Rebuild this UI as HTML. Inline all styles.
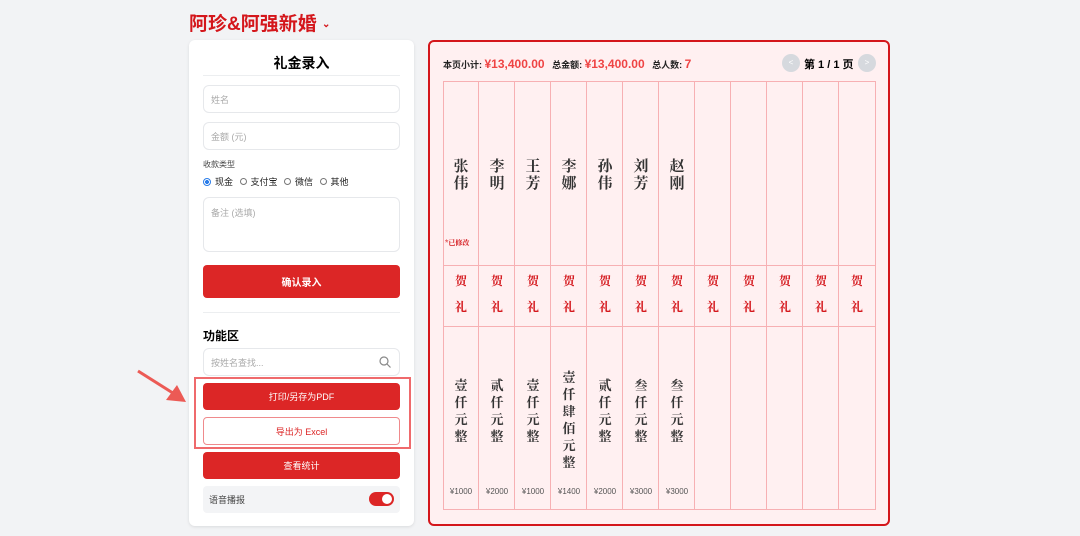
<!DOCTYPE html><html><head><meta charset="utf-8"><style>
*{box-sizing:border-box;margin:0;padding:0}
body{width:1080px;height:536px;background:#f2f3f5;font-family:"Liberation Sans","Noto Sans CJK SC",sans-serif;position:relative;overflow:hidden}
.abs{position:absolute}
.title{left:189px;top:9px;font-size:19px;font-weight:bold;color:#d4161b}
.card{left:189px;top:40px;width:225px;height:486px;background:#fff;border-radius:6px;box-shadow:0 1px 3px rgba(0,0,0,.1)}
.inp{position:absolute;left:14px;width:197px;border:1px solid #e6e8eb;border-radius:6px;font-size:9px;color:#aaa;padding-left:7px;display:flex;align-items:center}
.btn{position:absolute;left:14px;width:197px;height:27px;background:#dc2626;color:#fff;font-size:9px;border-radius:4px;display:flex;align-items:center;justify-content:center}
.panel{left:428px;top:40px;width:462px;height:486px;border:2px solid #d4161b;border-radius:6px;background:#fff0f1}
.col{position:absolute;top:81px;width:36px;height:429px;border-right:1px solid #f7b0b3}
.ser{font-family:"Noto Serif CJK SC",serif;font-weight:bold}
.nm{position:absolute;top:157px;width:36px;text-align:center;font-size:15px;line-height:17px;color:#333}
.hl{position:absolute;width:36px;text-align:center;font-size:12px;color:#d4161b}
.am{position:absolute;top:376px;width:36px;text-align:center;font-size:13px;line-height:17px;color:#333}
.yn{position:absolute;top:487px;width:36px;text-align:center;font-size:8px;color:#555}
</style></head><body>
<div class="abs title">阿珍&amp;阿强新婚 <span style="font-size:10px;vertical-align:3px">⌄</span></div>
<div class="abs card">
<div class="abs" style="left:0;width:225px;top:13px;text-align:center;font-size:14px;font-weight:bold">礼金录入</div>
<div class="abs" style="left:14px;top:35px;width:197px;border-top:1px solid #eceef0"></div>
<div class="inp" style="top:45px;height:28px">姓名</div>
<div class="inp" style="top:82px;height:28px">金额 (元)</div>
<div class="abs" style="left:14px;top:119px;font-size:8px;color:#444">收款类型</div>
<div class="abs" style="left:14px;top:135px;font-size:9px;color:#222;display:flex;align-items:center;gap:4px">
<span style="width:8px;height:8px;border-radius:50%;border:1px solid #2b7de9;background:radial-gradient(#2b7de9 45%,#fff 50%)"></span>现金&nbsp;
<span style="width:7px;height:7px;border-radius:50%;border:1px solid #777"></span>支付宝&nbsp;
<span style="width:7px;height:7px;border-radius:50%;border:1px solid #777"></span>微信&nbsp;
<span style="width:7px;height:7px;border-radius:50%;border:1px solid #777"></span>其他</div>
<div class="inp" style="top:157px;height:55px;align-items:flex-start;padding-top:8px">备注 (选填)</div>
<div class="btn" style="top:225px;height:33px;font-weight:bold;font-size:10px">确认录入</div>
<div class="abs" style="left:14px;top:272px;width:197px;border-top:1px solid #eceef0"></div>
<div class="abs" style="left:14px;top:287px;font-size:12px;font-weight:bold">功能区</div>
<div class="inp" style="top:308px;height:28px">按姓名查找...<svg style="position:absolute;right:8px;top:7px" width="12" height="12" viewBox="0 0 12 12"><circle cx="5" cy="5" r="4" fill="none" stroke="#888" stroke-width="1.2"/><path d="M8 8l3.5 3.5" stroke="#888" stroke-width="1.2"/></svg></div>
<div class="btn" style="top:343px">打印/另存为PDF</div>
<div class="btn" style="top:377px;height:28px;background:#fff;border:1px solid #ef8a8c;color:#dc2626">导出为 Excel</div>
<div class="btn" style="top:412px">查看统计</div>
<div class="abs" style="left:14px;top:446px;width:197px;height:27px;background:#f3f4f6;border-radius:4px;font-size:9px;color:#444;padding:7px 0 0 6px">语音播报
<div class="abs" style="right:6px;top:6px;width:25px;height:14px;border-radius:7px;background:#dc2626"><div class="abs" style="right:2px;top:2px;width:10px;height:10px;border-radius:50%;background:#fff"></div></div></div>
</div>
<div class="abs" style="left:194px;top:377px;width:217px;height:72px;border:2px solid #ef6a6c"></div>
<svg class="abs" style="left:130px;top:362px" width="62" height="46"><path d="M8 9L46 33" stroke="#ec5a55" stroke-width="3"/><path d="M56 40L36 38L47 23Z" fill="#ec5a55"/></svg>
<div class="abs panel"></div>
<div class="abs" style="left:443px;top:57px;font-size:9px;font-weight:bold;color:#222;white-space:nowrap">本页小计: <span style="color:#ef4444;font-size:12px">¥13,400.00</span>&nbsp;&nbsp; 总金额: <span style="color:#ef4444;font-size:12px">¥13,400.00</span>&nbsp;&nbsp; 总人数: <span style="color:#ef4444;font-size:12px">7</span></div>
<div class="abs" style="left:782px;top:54px;width:18px;height:18px;border-radius:50%;background:#d6d9de;color:#fff;font-size:8px;text-align:center;line-height:18px">&lt;</div>
<div class="abs" style="left:804px;top:56px;font-size:11px;font-weight:bold">第 1 / 1 页</div>
<div class="abs" style="left:858px;top:54px;width:18px;height:18px;border-radius:50%;background:#d6d9de;color:#fff;font-size:8px;text-align:center;line-height:18px">&gt;</div>
<div class="abs" style="left:443px;top:81px;width:433px;height:429px;border:1px solid #f7b0b3"></div>
<div class="abs" style="left:443px;top:265px;width:433px;border-top:1px solid #f7b0b3"></div>
<div class="abs" style="left:443px;top:326px;width:433px;border-top:1px solid #f7b0b3"></div>
<div id="g"></div>
<script>
var xs=[443,479,515,551,587,623,659,695,731,767,803,839];
var n=["张伟","李明","王芳","李娜","孙伟","刘芳","赵刚"];
var a=["壹仟元整","贰仟元整","壹仟元整","壹仟肆佰元整","贰仟元整","叁仟元整","叁仟元整"];
var y=["¥1000","¥2000","¥1000","¥1400","¥2000","¥3000","¥3000"];
var h="";
xs.forEach(function(x,i){
 if(i<11)h+='<div class="col" style="left:'+x+'px"></div>';
 h+='<div class="hl ser" style="left:'+x+'px;top:272px">贺</div><div class="hl ser" style="left:'+x+'px;top:298px">礼</div>';
 if(i<7){
  h+='<div class="nm ser" style="left:'+x+'px">'+n[i].split("").join("<br>")+'</div>';
  var t=i==3?368:376;
  h+='<div class="am ser" style="left:'+x+'px;top:'+t+'px">'+a[i].split("").join("<br>")+'</div>';
  h+='<div class="yn" style="left:'+x+'px">'+y[i]+'</div>';
 }
});
h+='<div class="abs ser" style="left:445px;top:238px;font-size:7px;color:#d4161b;white-space:nowrap">*已修改</div>';
document.getElementById("g").innerHTML=h;
</script>
</body></html>
